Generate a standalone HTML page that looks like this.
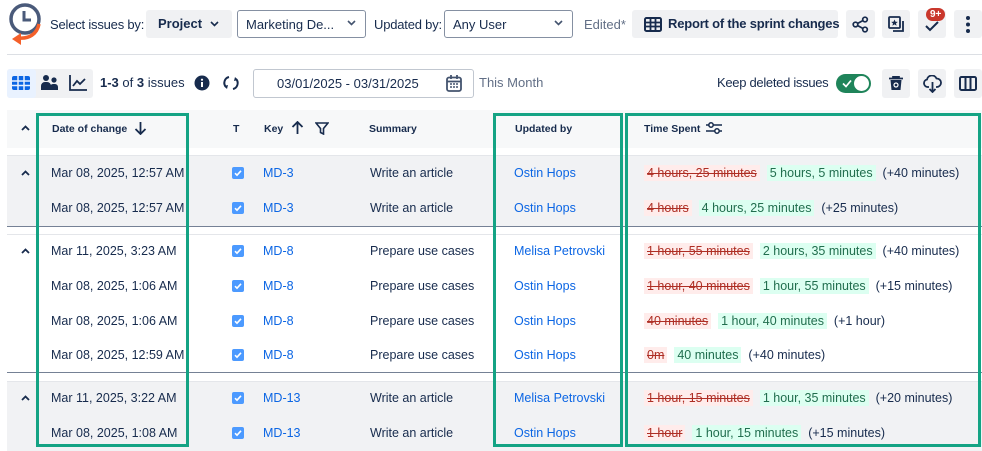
<!DOCTYPE html>
<html><head><style>
*{box-sizing:border-box;margin:0;padding:0;white-space:nowrap}
body{width:982px;height:448px;overflow:hidden;background:#fff;font-family:"Liberation Sans",Arial,sans-serif;color:#172b4d;font-size:13px;position:relative}
.a{position:absolute}
.btn{position:absolute;background:#f0f1f3;border-radius:3px}
.sel{position:absolute;border:1px solid #8590a2;border-radius:3px;background:#fff;font-size:13px;padding:0 8px;display:flex;align-items:center}
.chev{position:absolute;right:9px;top:9px}
.row{position:absolute;left:0;width:982px;height:35px;font-size:12.5px}
.row span{position:absolute;top:10px;white-space:nowrap}
.cb{position:absolute;left:232px;top:11px;width:12px;height:12px;background:#4c9aff;border-radius:2px}
.k{color:#0c66e4}
.old{background:#ffeceb;color:#ae2e24;text-decoration:line-through;padding:1px 3px;font-style:normal}
.new{background:#dcfff1;color:#216e4e;padding:1px 3px;font-style:normal}
.gb{position:absolute;border:3px solid #14a384;top:113px;height:334px}
.h{position:absolute;top:123px;font-size:10.5px;font-weight:bold}
</style></head><body>
<svg class="a" style="left:7px;top:2px" width="36" height="46" viewBox="0 0 36 46"><circle cx="18" cy="17" r="14" fill="none" stroke="#4a5a7a" stroke-width="3.5"/><path d="M17 9v9h7" stroke="#4a5a7a" stroke-width="3" fill="none"/><path d="M32 22c-2 10-10 15-20 14" stroke="#f4602a" stroke-width="3.5" fill="none"/><path d="M5 37l9-6v12z" fill="#f4602a"/></svg>
<div class="a" style="left:50px;top:17px;font-size:13px;letter-spacing:-0.2px">Select issues by:</div>
<div class="btn" style="left:146px;top:10px;width:86px;height:28px"><span class="a" style="left:12px;top:6px;font-weight:bold;font-size:13px">Project</span><svg class="a" style="left:64px;top:11px" width="9" height="6"><path d="M1 1l3.5 3.5L8 1" stroke="#172b4d" stroke-width="1.6" fill="none"/></svg></div>
<div class="sel" style="left:237px;top:10px;width:129px;height:28px">Marketing De...<svg class="chev" width="9" height="6"><path d="M1 1l3.5 3.5L8 1" stroke="#44546f" stroke-width="1.6" fill="none"/></svg></div>
<div class="a" style="left:374px;top:17px;font-size:13px;letter-spacing:-0.2px">Updated by:</div>
<div class="sel" style="left:444px;top:10px;width:129px;height:28px">Any User<svg class="chev" width="9" height="6"><path d="M1 1l3.5 3.5L8 1" stroke="#44546f" stroke-width="1.6" fill="none"/></svg></div>
<div class="a" style="left:584px;top:17px;font-size:13px;color:#626f86">Edited*</div>
<div class="btn" style="left:632px;top:10px;width:206px;height:28px"><svg class="a" style="left:12px;top:7px" width="18" height="15"><rect x="1" y="1" width="16" height="13" rx="1.5" fill="none" stroke="#172b4d" stroke-width="2"/><path d="M1 5.5h16M1 9.5h16M6.5 1v13M11.5 1v13" stroke="#172b4d" stroke-width="1.8"/></svg><span class="a" style="left:36px;top:6px;font-weight:bold;font-size:13px;letter-spacing:-0.2px">Report of the sprint changes</span></div>
<div class="btn" style="left:846px;top:10px;width:29px;height:28px"><svg class="a" style="left:6px;top:6px" width="17" height="17"><circle cx="13" cy="3.5" r="2.3" fill="none" stroke="#172b4d" stroke-width="1.7"/><circle cx="3.5" cy="8.5" r="2.3" fill="none" stroke="#172b4d" stroke-width="1.7"/><circle cx="13" cy="13.5" r="2.3" fill="none" stroke="#172b4d" stroke-width="1.7"/><path d="M5.5 7.5l5.5-3M5.5 9.5l5.5 3" stroke="#172b4d" stroke-width="1.7"/></svg></div>
<div class="btn" style="left:882px;top:10px;width:28px;height:28px"><svg class="a" style="left:6px;top:6px" width="17" height="17"><rect x="1" y="1" width="11" height="11" rx="1" fill="none" stroke="#172b4d" stroke-width="1.8"/><path d="M15 5v10H5" stroke="#172b4d" stroke-width="1.8" fill="none"/><path d="M6.5 3.5l1 2.2 2.3.2-1.8 1.5.6 2.3-2.1-1.3-2.1 1.3.6-2.3-1.8-1.5 2.3-.2z" fill="#172b4d"/></svg></div>
<div class="btn" style="left:918px;top:10px;width:28px;height:28px"><svg class="a" style="left:7px;top:11px" width="14" height="12"><path d="M1 5l4 4 8-8" stroke="#172b4d" stroke-width="2" fill="none"/></svg><div class="a" style="left:8px;top:-2px;background:#c9372c;color:#fff;font-size:10px;font-weight:bold;border-radius:8px;padding:1px 4px">9+</div></div>
<div class="btn" style="left:954px;top:10px;width:28px;height:28px"><svg class="a" style="left:11px;top:5px" width="6" height="19"><circle cx="3" cy="3" r="2" fill="#172b4d"/><circle cx="3" cy="9.5" r="2" fill="#172b4d"/><circle cx="3" cy="16" r="2" fill="#172b4d"/></svg></div>
<div class="a" style="left:7px;top:54px;width:975px;height:1px;background:#dcdfe4"></div>
<div class="btn" style="left:7px;top:69px;width:86px;height:29px"></div>
<div class="a" style="left:7px;top:69px;width:29px;height:29px;background:#e9f2ff;border-radius:3px"></div>
<svg class="a" style="left:12px;top:76px" width="18" height="14"><rect x="0" y="0" width="18" height="14" rx="2" fill="#0c66e4"/><path d="M0 5h18M0 9.5h18M6 0v14M12 0v14" stroke="#e9f2ff" stroke-width="1.5"/></svg>
<svg class="a" style="left:41px;top:74px" width="18" height="17"><circle cx="5" cy="4" r="3" fill="#172b4d"/><circle cx="13" cy="6" r="2.6" fill="#172b4d"/><path d="M0 16v-4a4 4 0 0 1 4-4h2a4 4 0 0 1 4 4v4zM9 16v-3a3 3 0 0 1 3-3h2a3 3 0 0 1 3 3v3z" fill="#172b4d"/></svg>
<svg class="a" style="left:69px;top:75px" width="19" height="16"><path d="M1 0v15h17" stroke="#172b4d" stroke-width="1.8" fill="none"/><path d="M4 11l4-5 3 3 5-5" stroke="#172b4d" stroke-width="1.8" fill="none"/></svg>
<div class="a" style="left:100px;top:75px;font-size:13px"><b>1-3</b> of <b>3</b> issues</div>
<svg class="a" style="left:194px;top:75px" width="16" height="16"><circle cx="8" cy="8" r="7.5" fill="#172b4d"/><rect x="7" y="7" width="2" height="5" fill="#fff"/><circle cx="8" cy="4.7" r="1.1" fill="#fff"/></svg>
<svg class="a" style="left:222px;top:74px" width="18" height="18"><path d="M7 3a6 6 0 0 0-3 10M11 15a6 6 0 0 0 3-10" stroke="#172b4d" stroke-width="2" fill="none"/><path d="M2 12l3 3 1-4zM16 6l-3-3-1 4z" fill="#172b4d"/></svg>
<div class="a" style="left:253px;top:69px;width:221px;height:29px;border:1px solid #c1c7d0;border-radius:3px"><span class="a" style="left:23px;top:6px;font-size:13px">03/01/2025 - 03/31/2025</span><svg class="a" style="left:192px;top:5px" width="16" height="17"><rect x="1" y="2.5" width="14" height="13.5" rx="2" fill="none" stroke="#44546f" stroke-width="1.8"/><path d="M1 6.5h14M5 0v4M11 0v4" stroke="#44546f" stroke-width="1.8"/><path d="M4 9h2M7 9h2M10 9h2M4 12h2M7 12h2M10 12h2" stroke="#44546f" stroke-width="1.5"/></svg></div>
<div class="a" style="left:479px;top:75px;font-size:13px;color:#626f86">This Month</div>
<div class="a" style="left:717px;top:75px;font-size:13px;letter-spacing:-0.3px">Keep deleted issues</div>
<div class="a" style="left:836px;top:74px;width:35px;height:19px;border-radius:10px;background:#1f845a"><svg class="a" style="left:6px;top:5px" width="10" height="9"><path d="M1 4.5l3 3 5-6" stroke="#fff" stroke-width="1.7" fill="none"/></svg><div class="a" style="left:18px;top:2px;width:15px;height:15px;border-radius:50%;background:#fff"></div></div>
<div class="btn" style="left:882px;top:69px;width:28px;height:29px"><svg class="a" style="left:7px;top:7px" width="14" height="15"><path d="M0 2.5h14M4 2.5V0.8h6v1.7" stroke="#172b4d" stroke-width="1.7" fill="none"/><path d="M1.5 4h11l-1 10h-9z" fill="#172b4d"/><circle cx="7" cy="9" r="2" fill="none" stroke="#fff" stroke-width="1.2"/></svg></div>
<div class="btn" style="left:918px;top:69px;width:28px;height:29px"><svg class="a" style="left:5px;top:6px" width="19" height="18"><path d="M6 12H4.5a3.8 3.8 0 0 1-.5-7.5 5 5 0 0 1 9.5-1 4 4 0 0 1 .5 8.5H13" stroke="#172b4d" stroke-width="1.8" fill="none"/><path d="M9.5 7v10M6.5 14l3 3 3-3" stroke="#172b4d" stroke-width="1.8" fill="none"/></svg></div>
<div class="btn" style="left:954px;top:69px;width:28px;height:29px"><svg class="a" style="left:5px;top:7px" width="18" height="15"><rect x="1" y="1" width="16" height="13" rx="1.5" fill="none" stroke="#172b4d" stroke-width="2"/><path d="M6.5 1v13M11.5 1v13" stroke="#172b4d" stroke-width="2"/></svg></div>
<div class="a" style="left:7px;top:110px;width:975px;height:38px;background:#f7f8f9"></div>
<svg class="a" style="left:21px;top:125px" width="9" height="6"><path d="M1 5l3.5-3.5L8 5" stroke="#172b4d" stroke-width="1.8" fill="none"/></svg>
<div class="h" style="left:52px">Date of change</div>
<svg class="a" style="left:134px;top:121px" width="13" height="14"><path d="M6.5 1v12M1.5 8l5 5 5-5" stroke="#172b4d" stroke-width="1.8" fill="none"/></svg>
<div class="h" style="left:233px">T</div>
<div class="h" style="left:264px">Key</div>
<svg class="a" style="left:291px;top:121px" width="13" height="14"><path d="M6.5 13V1M1.5 6l5-5 5 5" stroke="#172b4d" stroke-width="1.8" fill="none"/></svg>
<svg class="a" style="left:315px;top:122px" width="14" height="13"><path d="M1 1h12l-4.5 5.5V12l-3-1.5V6.5z" stroke="#172b4d" stroke-width="1.6" fill="none"/></svg>
<div class="h" style="left:369px">Summary</div>
<div class="h" style="left:515px">Updated by</div>
<div class="h" style="left:644px">Time Spent</div>
<svg class="a" style="left:706px;top:121px" width="17" height="14"><path d="M0 4h16M0 10h16" stroke="#172b4d" stroke-width="1.6"/><circle cx="5" cy="4" r="2.2" fill="#fff" stroke="#172b4d" stroke-width="1.5"/><circle cx="11" cy="10" r="2.2" fill="#fff" stroke="#172b4d" stroke-width="1.5"/></svg>
<div class="a" style="left:7px;top:155px;width:975px;height:72px;background:#f1f2f4;border-top:1px solid #e4e6ea;border-bottom:1px solid #758195"></div>
<div class="a" style="left:7px;top:234px;width:975px;height:139px;background:#fff;border-top:1px solid #e4e6ea;border-bottom:1px solid #758195"></div>
<div class="a" style="left:7px;top:381px;width:975px;height:70px;background:#f1f2f4;border-top:1px solid #e4e6ea"></div>

<div class="row" style="top:156px"><svg class="a" style="left:21px;top:14px" width="9" height="6"><path d="M1 5l3.5-3.5L8 5" stroke="#172b4d" stroke-width="1.8" fill="none"/></svg><span style="left:51px">Mar 08, 2025, 12:57 AM</span><div class="cb"><svg width="12" height="12"><path d="M3 6.2l2 2 4-4.4" stroke="#fff" stroke-width="1.6" fill="none"/></svg></div><span class="k" style="left:263px">MD-3</span><span style="left:370px">Write an article</span><span class="k" style="left:514px">Ostin Hops</span><span style="left:644px"><i class="old">4 hours, 25 minutes</i>&nbsp;&nbsp;<i class="new">5 hours, 5 minutes</i>&nbsp;&nbsp;(+40 minutes)</span></div>
<div class="row" style="top:191px"><span style="left:51px">Mar 08, 2025, 12:57 AM</span><div class="cb"><svg width="12" height="12"><path d="M3 6.2l2 2 4-4.4" stroke="#fff" stroke-width="1.6" fill="none"/></svg></div><span class="k" style="left:263px">MD-3</span><span style="left:370px">Write an article</span><span class="k" style="left:514px">Ostin Hops</span><span style="left:644px"><i class="old">4 hours</i>&nbsp;&nbsp;<i class="new">4 hours, 25 minutes</i>&nbsp;&nbsp;(+25 minutes)</span></div>
<div class="row" style="top:234px"><svg class="a" style="left:21px;top:14px" width="9" height="6"><path d="M1 5l3.5-3.5L8 5" stroke="#172b4d" stroke-width="1.8" fill="none"/></svg><span style="left:51px">Mar 11, 2025, 3:23 AM</span><div class="cb"><svg width="12" height="12"><path d="M3 6.2l2 2 4-4.4" stroke="#fff" stroke-width="1.6" fill="none"/></svg></div><span class="k" style="left:263px">MD-8</span><span style="left:370px">Prepare use cases</span><span class="k" style="left:514px">Melisa Petrovski</span><span style="left:644px"><i class="old">1 hour, 55 minutes</i>&nbsp;&nbsp;<i class="new">2 hours, 35 minutes</i>&nbsp;&nbsp;(+40 minutes)</span></div>
<div class="row" style="top:269px"><span style="left:51px">Mar 08, 2025, 1:06 AM</span><div class="cb"><svg width="12" height="12"><path d="M3 6.2l2 2 4-4.4" stroke="#fff" stroke-width="1.6" fill="none"/></svg></div><span class="k" style="left:263px">MD-8</span><span style="left:370px">Prepare use cases</span><span class="k" style="left:514px">Ostin Hops</span><span style="left:644px"><i class="old">1 hour, 40 minutes</i>&nbsp;&nbsp;<i class="new">1 hour, 55 minutes</i>&nbsp;&nbsp;(+15 minutes)</span></div>
<div class="row" style="top:304px"><span style="left:51px">Mar 08, 2025, 1:06 AM</span><div class="cb"><svg width="12" height="12"><path d="M3 6.2l2 2 4-4.4" stroke="#fff" stroke-width="1.6" fill="none"/></svg></div><span class="k" style="left:263px">MD-8</span><span style="left:370px">Prepare use cases</span><span class="k" style="left:514px">Ostin Hops</span><span style="left:644px"><i class="old">40 minutes</i>&nbsp;&nbsp;<i class="new">1 hour, 40 minutes</i>&nbsp;&nbsp;(+1 hour)</span></div>
<div class="row" style="top:338px"><span style="left:51px">Mar 08, 2025, 12:59 AM</span><div class="cb"><svg width="12" height="12"><path d="M3 6.2l2 2 4-4.4" stroke="#fff" stroke-width="1.6" fill="none"/></svg></div><span class="k" style="left:263px">MD-8</span><span style="left:370px">Prepare use cases</span><span class="k" style="left:514px">Ostin Hops</span><span style="left:644px"><i class="old">0m</i>&nbsp;&nbsp;<i class="new">40 minutes</i>&nbsp;&nbsp;(+40 minutes)</span></div>
<div class="row" style="top:381px"><svg class="a" style="left:21px;top:14px" width="9" height="6"><path d="M1 5l3.5-3.5L8 5" stroke="#172b4d" stroke-width="1.8" fill="none"/></svg><span style="left:51px">Mar 11, 2025, 3:22 AM</span><div class="cb"><svg width="12" height="12"><path d="M3 6.2l2 2 4-4.4" stroke="#fff" stroke-width="1.6" fill="none"/></svg></div><span class="k" style="left:263px">MD-13</span><span style="left:370px">Write an article</span><span class="k" style="left:514px">Melisa Petrovski</span><span style="left:644px"><i class="old">1 hour, 15 minutes</i>&nbsp;&nbsp;<i class="new">1 hour, 35 minutes</i>&nbsp;&nbsp;(+20 minutes)</span></div>
<div class="row" style="top:416px"><span style="left:51px">Mar 08, 2025, 1:08 AM</span><div class="cb"><svg width="12" height="12"><path d="M3 6.2l2 2 4-4.4" stroke="#fff" stroke-width="1.6" fill="none"/></svg></div><span class="k" style="left:263px">MD-13</span><span style="left:370px">Write an article</span><span class="k" style="left:514px">Ostin Hops</span><span style="left:644px"><i class="old">1 hour</i>&nbsp;&nbsp;<i class="new">1 hour, 15 minutes</i>&nbsp;&nbsp;(+15 minutes)</span></div>

<div class="gb" style="left:36px;width:153px"></div>
<div class="gb" style="left:493px;width:130px"></div>
<div class="gb" style="left:625px;width:356px"></div>
</body></html>
